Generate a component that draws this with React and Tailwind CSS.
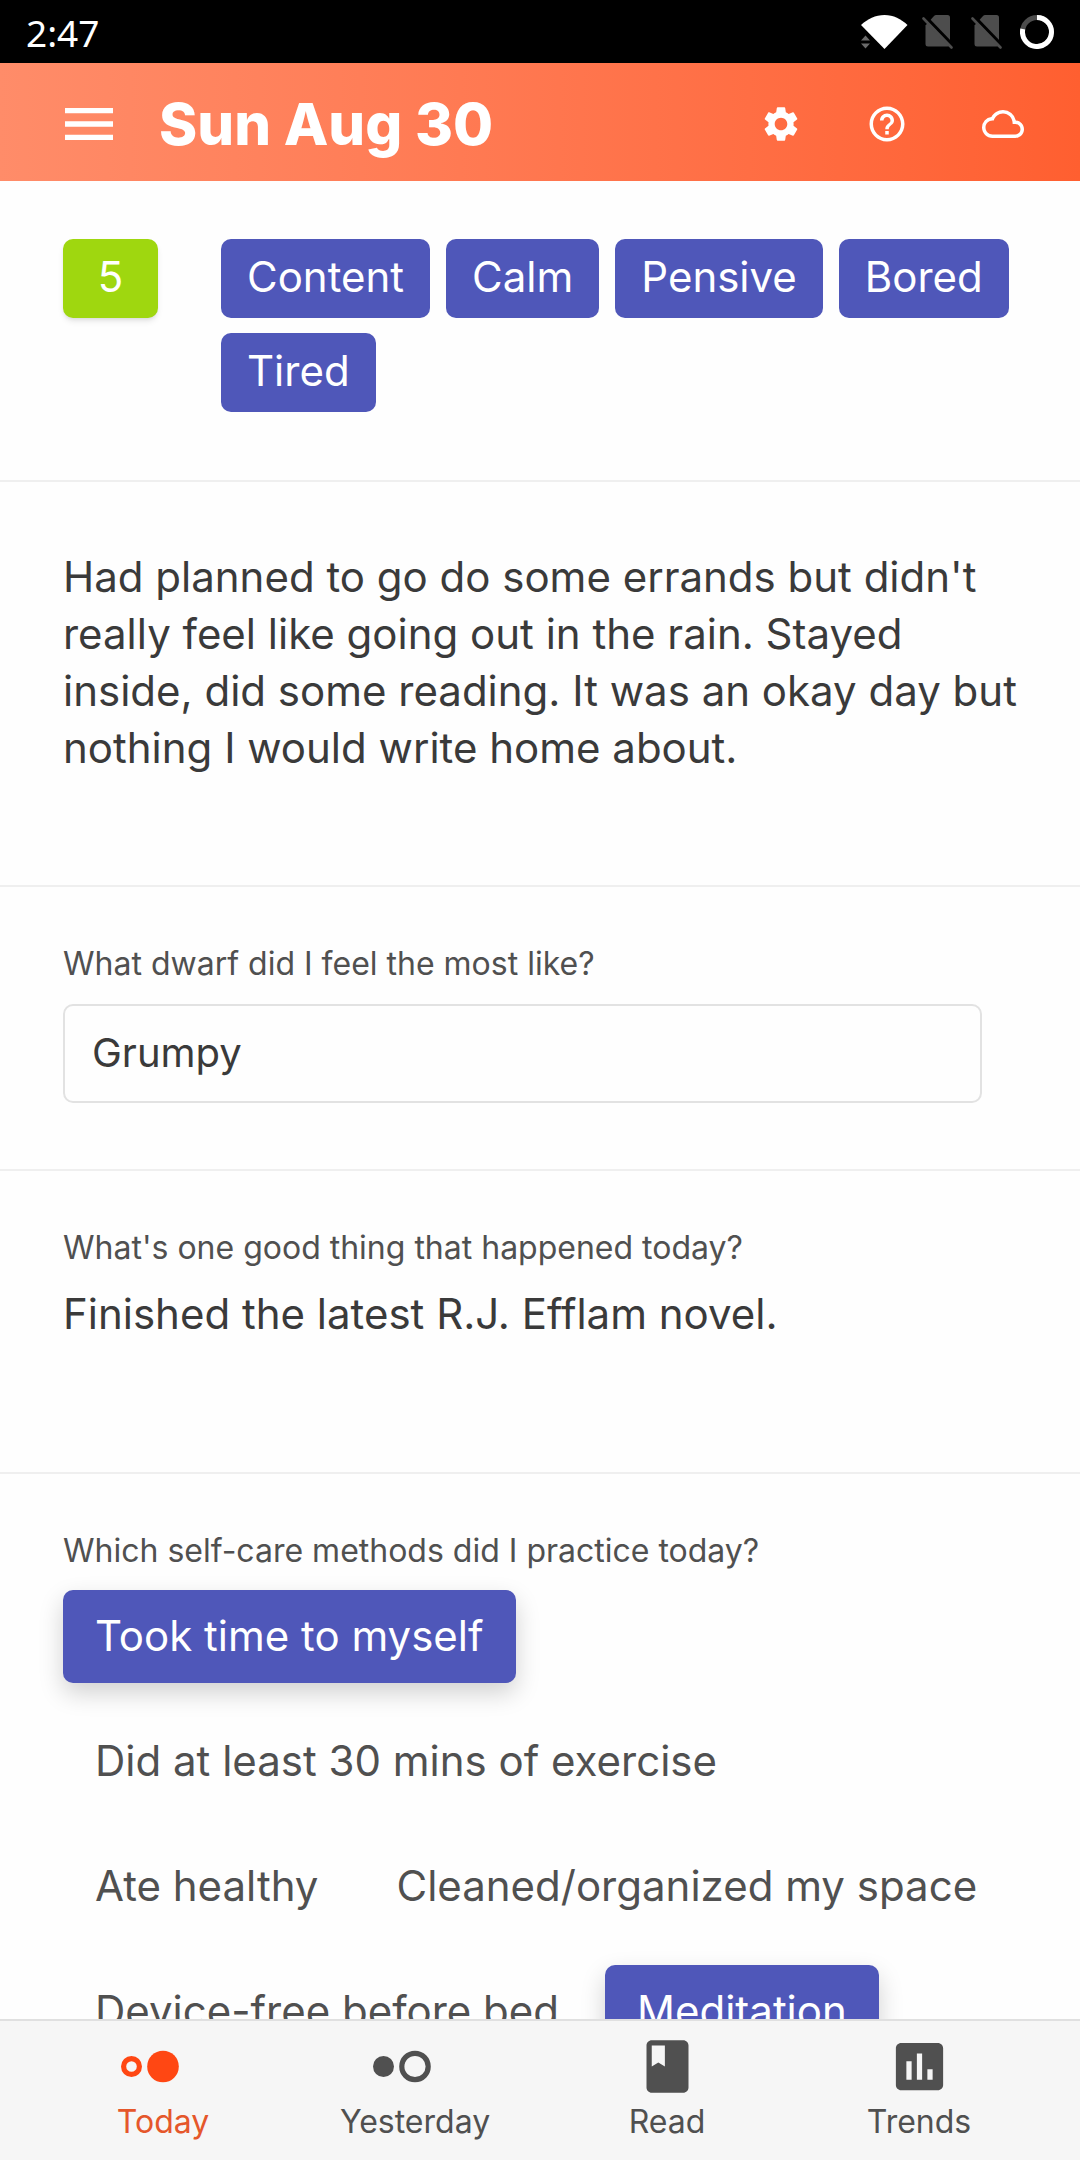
import { useState } from "react";
import {
  MdAssessment,
  MdBook,
  MdCloudQueue,
  MdHelpOutline,
  MdMenu,
  MdSettings,
} from "react-icons/md";

const MOODS = ["Content", "Calm", "Pensive", "Bored", "Tired"];

const SELF_CARE = [
  "Took time to myself",
  "Did at least 30 mins of exercise",
  "Ate healthy",
  "Cleaned/organized my space",
  "Device-free before bed",
  "Meditation",
];

const ENTRY =
  "Had planned to go do some errands but didn't really feel like going out in the rain. Stayed inside, did some reading. It was an okay day but nothing I would write home about.";

function WifiIcon() {
  return (
    <svg viewBox="0 0 48 34" className="h-[34px] w-12" aria-label="Wi-Fi">
      <path d="M1 10C7.500 4 15.500 0 24.500 0S41 4 47.500 10L24.500 34Z" fill="#fff" />
      <path d="M1 25.500L5.500 20.500L10 25.500ZM1 28.500H10L5.500 33.500Z" fill="#6a6a6a" />
    </svg>
  );
}

function NoSimIcon() {
  return (
    <svg viewBox="0 0 31 34" className="h-[34px] w-[31px]" aria-label="No SIM">
      <path
        d="M14 0H25.500Q28 0 28 2.500V29Q28 31.500 25.500 31.500H6Q3.500 31.500 3.500 29V10.500L12 1Q13 0 14 0Z"
        fill="#4d4d4d"
      />
      <path d="M4 2.500L31 30.500" stroke="#000" strokeWidth="3.400" />
      <path d="M1.500 3.500L29.500 32.500" stroke="#4d4d4d" strokeWidth="2.600" strokeLinecap="round" />
    </svg>
  );
}

function BatteryRing() {
  return (
    <svg viewBox="0 0 34 34" className="size-[34px]" aria-label="Battery">
      <circle cx="17" cy="17" r="14.500" fill="none" stroke="#4d4d4d" strokeWidth="5" />
      <path d="M17 2.500A14.500 14.500 0 1 1 2.800 14" fill="none" stroke="#fff" strokeWidth="5" />
    </svg>
  );
}

function TodayIcon() {
  return (
    <svg viewBox="0 0 84 63" className="h-[63px] w-[84px] text-[#ff4713]">
      <circle cx="10.500" cy="31.500" r="7.900" fill="none" stroke="currentColor" strokeWidth="5.200" />
      <circle cx="42" cy="31.500" r="15.800" fill="currentColor" />
    </svg>
  );
}

function YesterdayIcon() {
  return (
    <svg viewBox="0 0 84 63" className="h-[63px] w-[84px]">
      <circle cx="10.500" cy="31.500" r="10.500" fill="currentColor" />
      <circle cx="42" cy="31.500" r="13.200" fill="none" stroke="currentColor" strokeWidth="5.200" />
    </svg>
  );
}

const TABS = [
  { name: "Today", icon: <TodayIcon />, active: true },
  { name: "Yesterday", icon: <YesterdayIcon /> },
  { name: "Read", icon: <MdBook className="size-[63px]" /> },
  { name: "Trends", icon: <MdAssessment className="size-[63px]" /> },
];

const SECTION = "border-b-2 border-[#efefef] px-[63px]";
const LABEL = "mb-3 block text-[32px] leading-[50px] text-[#505050]";

export default function App() {
  const [selected, setSelected] = useState(["Took time to myself", "Meditation"]);
  const toggle = (item) =>
    setSelected((list) =>
      list.includes(item) ? list.filter((i) => i !== item) : [...list, item]
    );

  return (
    <div className="flex h-screen flex-col bg-[#fefefe] font-['Inter',sans-serif] text-[42px] leading-[57px] text-[#3a3a3a]">
      <div className="flex h-[63px] shrink-0 items-center justify-between bg-black px-[26px] text-white">
        <span className="pt-0.5 font-['Noto_Sans',sans-serif] text-[37px]">2:47</span>
        <div className="flex items-center gap-[18px]">
          <div className="-mr-1">
            <WifiIcon />
          </div>
          <NoSimIcon />
          <NoSimIcon />
          <BatteryRing />
        </div>
      </div>

      <header className="flex h-[118px] shrink-0 items-center bg-linear-to-r from-[#ff8c69] to-[#ff5f30] pt-1 pr-14 pl-[57px] text-white">
        <button type="button" aria-label="Menu">
          <MdMenu className="size-16" />
        </button>
        <h1 className="ml-[38px] flex-1 text-[58px] font-extrabold">Sun Aug 30</h1>
        <div className="flex items-center">
          <button type="button" aria-label="Settings">
            <MdSettings className="size-[42px]" />
          </button>
          <button type="button" aria-label="Help" className="ml-16">
            <MdHelpOutline className="size-[42px]" />
          </button>
          <button type="button" aria-label="Sync" className="ml-[74px]">
            <MdCloudQueue className="size-[42px]" />
          </button>
        </div>
      </header>

      <main className="min-h-0 flex-1 overflow-y-auto [scrollbar-width:none]">
        <section className={`${SECTION} flex gap-[63px] pt-[58px] pb-[68px]`}>
          <button
            type="button"
            aria-label="Day rating 5"
            className="h-[79px] w-[95px] shrink-0 rounded-[10px] bg-[#9fd70f] pb-1 text-white shadow-md"
          >
            5
          </button>
          <div className="-mr-5 flex flex-wrap gap-x-4 gap-y-[15px]">
            {MOODS.map((mood) => (
              <button
                key={mood}
                type="button"
                className="h-[79px] rounded-[10px] bg-[#4f57b9] px-[26px] pb-1 text-white"
              >
                {mood}
              </button>
            ))}
          </div>
        </section>

        <section className={`${SECTION} pt-[66px] pb-[109px]`}>
          <textarea
            aria-label="Journal entry"
            rows={4}
            defaultValue={ENTRY}
            className="block w-full resize-none overflow-hidden outline-none"
          />
        </section>

        <section className={`${SECTION} pt-[52px] pb-[66px]`}>
          <label htmlFor="dwarf" className={LABEL}>
            What dwarf did I feel the most like?
          </label>
          <div className="pt-[3px] pr-[35px]">
            <input
              id="dwarf"
              type="text"
              defaultValue="Grumpy"
              className="block h-[99px] w-full rounded-[10px] border-2 border-[#e2e2e2] px-[27px] pb-0.5 text-[40px] outline-none"
            />
          </div>
        </section>

        <section className={`${SECTION} pt-[52px] pb-[130px]`}>
          <label htmlFor="good-thing" className={LABEL}>
            What's one good thing that happened today?
          </label>
          <textarea
            id="good-thing"
            rows={1}
            defaultValue="Finished the latest R.J. Efflam novel."
            className="block w-full resize-none overflow-hidden outline-none"
          />
        </section>

        <section className="px-[63px] pt-[52px]">
          <h2 id="self-care" className={LABEL}>
            Which self-care methods did I practice today?
          </h2>
          <div
            role="group"
            aria-labelledby="self-care"
            className="flex flex-wrap gap-x-3.5 gap-y-8 pt-0.5"
          >
            {SELF_CARE.map((item) => (
              <button
                key={item}
                type="button"
                aria-pressed={selected.includes(item)}
                onClick={() => toggle(item)}
                className="h-[93px] rounded-[10px] px-8 pb-0.5 text-[#505050] aria-pressed:bg-[#4f57b9] aria-pressed:text-white aria-pressed:shadow-[0_10px_24px_rgba(0,0,0,0.18)]"
              >
                {item}
              </button>
            ))}
          </div>
        </section>
      </main>

      <nav className="grid h-[141px] shrink-0 grid-cols-4 border-t-2 border-[#e0e0e0] bg-[#f6f6f6] pr-[35px] pl-[37px] text-[#505050]">
        {TABS.map(({ name, icon, active }) => (
          <a
            key={name}
            href={`#${name.toLowerCase()}`}
            aria-current={active ? "page" : undefined}
            className="flex flex-col items-center pt-3.5 text-[32px] leading-[48px] aria-[current=page]:text-[#e5572b]"
          >
            {icon}
            <span>{name}</span>
          </a>
        ))}
      </nav>
    </div>
  );
}
